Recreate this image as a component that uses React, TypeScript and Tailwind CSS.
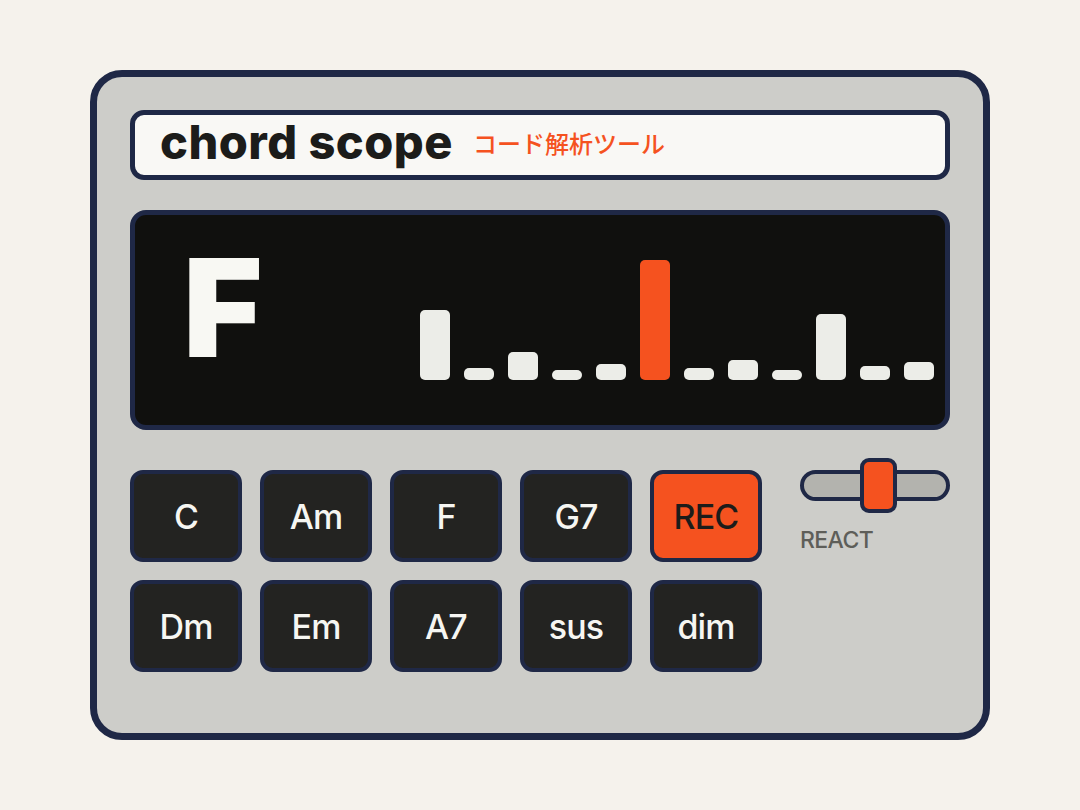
import React from 'react';

const bars = [70, 12, 28, 10, 16, 120, 12, 20, 10, 66, 14, 18];
const activeBar = 5;

const chordRows = [
  ['C', 'Am', 'F', 'G7', 'REC'],
  ['Dm', 'Em', 'A7', 'sus', 'dim'],
];

function ChordKey({ label }: { label: string }) {
  const rec = label === 'REC';
  return (
    <button
      className={
        'flex h-[92px] w-[112px] items-center justify-center rounded-[13px] border-[4px] border-[#1f2846] text-[34px] font-medium tracking-tight ' +
        (rec ? 'bg-[#f5521f] text-[#1c1c1a]' : 'bg-[#232321] text-[#f6f6f2]')
      }
    >
      {label}
    </button>
  );
}

export default function App() {
  return (
    <div
      className="flex min-h-[810px] w-full items-center justify-center bg-[#f5f2ec]"
      style={{ fontFamily: 'Inter, "Noto Sans CJK JP", sans-serif' }}
    >
      <div className="box-border h-[670px] w-[900px] rounded-[32px] border-[7px] border-[#1f2846] bg-[#cdcdc9] px-[33px] pt-[33px]">
        {/* title plate */}
        <div className="box-border flex h-[70px] items-center rounded-[14px] border-[5px] border-[#1f2846] bg-[#f9f8f5] pb-[6px] pl-[25px]">
          <span className="text-[47px] font-extrabold leading-[54px] tracking-[0.01em] text-[#1c1c1a]">chord scope</span>
          <span className="ml-[20px] mt-[6px] text-[24px] font-medium text-[#f5521f]">コード解析ツール</span>
        </div>

        {/* display */}
        <div className="mt-[30px] box-border flex h-[220px] rounded-[16px] border-[5px] border-[#1f2846] bg-[#10100e]">
          <div className="pl-[48px] pt-[25px] text-[136px] font-black leading-none text-[#f8f8f3]">F</div>
          <div className="ml-auto flex items-end gap-[14px] pb-[45px] pr-[11px]">
            {bars.map((h, i) => (
              <div
                key={i}
                className={'w-[30px] rounded-[5px] ' + (i === activeBar ? 'bg-[#f5521f]' : 'bg-[#ecede8]')}
                style={{ height: h }}
              />
            ))}
          </div>
        </div>

        {/* controls */}
        <div className="mt-[40px] flex">
          <div className="flex flex-col gap-[18px]">
            {chordRows.map((row, r) => (
              <div key={r} className="flex gap-[18px]">
                {row.map((c) => (
                  <ChordKey key={c} label={c} />
                ))}
              </div>
            ))}
          </div>
          <div className="ml-[38px] flex flex-col">
            <div className="relative h-[31px] w-[150px] rounded-full border-[4px] border-[#1f2846] bg-[#b3b3ae]">
              <div className="absolute left-[56px] top-[-16px] h-[55px] w-[37px] rounded-[9px] border-[4px] border-[#1f2846] bg-[#f5521f]" />
            </div>
            <span className="mt-[28px] text-[23px] font-medium leading-none tracking-tight text-[#5e5e59]">REACT</span>
          </div>
        </div>
      </div>
    </div>
  );
}
